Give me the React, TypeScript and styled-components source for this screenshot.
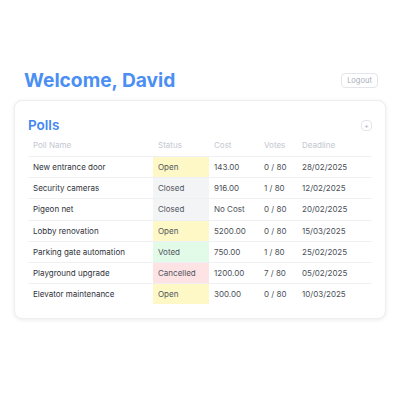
import React from "react";
import styled, { createGlobalStyle } from "styled-components";

const Global = createGlobalStyle`
  html, body { margin: 0; padding: 0; background: #ffffff; }
  body { font-family: Inter, "Noto Sans", sans-serif; }
`;

const Page = styled.div`
  width: 400px;
  height: 400px;
  box-sizing: border-box;
  padding: 68px 14px 0 14px;
`;

const Header = styled.header`
  display: flex;
  align-items: center;
  justify-content: space-between;
  height: 24px;
  padding: 0 8px 0 10px;
`;

const Title = styled.h1`
  margin: 0;
  font-size: 19.2px;
  line-height: 24px;
  font-weight: 700;
  color: #4b8ff3;
  letter-spacing: 0;
`;

const LogoutButton = styled.button`
  box-sizing: border-box;
  width: 37px;
  height: 15px;
  padding: 0;
  border: 1px solid #e3e5ea;
  border-radius: 4px;
  background: #fff;
  font-family: Inter, sans-serif;
  font-size: 7.5px;
  line-height: 13px;
  color: #a9aeb8;
`;

const Card = styled.section`
  margin-top: 8px;
  box-sizing: border-box;
  border: 1px solid #eceef2;
  border-radius: 8px;
  padding: 15px 13px 14px 13px;
  background: #fff;
  box-shadow: 0 1px 4px rgba(0, 0, 0, 0.08);
`;

const CardHead = styled.div`
  display: flex;
  align-items: center;
  justify-content: space-between;
  height: 18px;
`;

const CardTitle = styled.h2`
  margin: 0;
  font-size: 13.5px;
  line-height: 18px;
  font-weight: 600;
  color: #3f86f2;
`;

const PlusButton = styled.button`
  box-sizing: border-box;
  width: 11px;
  height: 11px;
  padding: 0;
  border: 1px solid #e3e5ea;
  border-radius: 4px;
  background: #fff;
  font-family: Inter, sans-serif;
  font-size: 7px;
  line-height: 9px;
  color: #a9aeb8;
`;

const Row = styled.div<{ $head?: boolean; $last?: boolean }>`
  display: grid;
  grid-template-columns: 125px 56px 50px 38px 1fr;
  height: ${(p) => (p.$head ? "22px" : "20.2px")};
  border-bottom: ${(p) => (p.$last ? "none" : "1px solid #eef0f3")};
  font-size: 8px;
  color: ${(p) => (p.$head ? "#c3c7cf" : "#4a4f57")};
`;

const Cell = styled.div<{ $strong?: boolean }>`
  display: flex;
  align-items: center;
  padding-left: 5px;
  white-space: nowrap;
  color: ${(p) => (p.$strong ? "#2f333a" : "inherit")};
`;

const statusBg: Record<string, string> = {
  Open: "#fdf8c6",
  Closed: "#f3f4f6",
  Voted: "#e2fae8",
  Cancelled: "#fde3e3",
};

const StatusCell = styled(Cell)<{ $status: string }>`
  background: ${(p) => statusBg[p.$status] || "transparent"};
  color: #50555d;
`;

const polls = [
  { name: "New entrance door", status: "Open", cost: "143.00", votes: "0 / 80", deadline: "28/02/2025" },
  { name: "Security cameras", status: "Closed", cost: "916.00", votes: "1 / 80", deadline: "12/02/2025" },
  { name: "Pigeon net", status: "Closed", cost: "No Cost", votes: "0 / 80", deadline: "20/02/2025" },
  { name: "Lobby renovation", status: "Open", cost: "5200.00", votes: "0 / 80", deadline: "15/03/2025" },
  { name: "Parking gate automation", status: "Voted", cost: "750.00", votes: "1 / 80", deadline: "25/02/2025" },
  { name: "Playground upgrade", status: "Cancelled", cost: "1200.00", votes: "7 / 80", deadline: "05/02/2025" },
  { name: "Elevator maintenance", status: "Open", cost: "300.00", votes: "0 / 80", deadline: "10/03/2025" },
];

export default function App() {
  return (
    <>
      <Global />
      <Page>
        <Header>
          <Title>Welcome, David</Title>
          <LogoutButton>Logout</LogoutButton>
        </Header>
        <Card>
          <CardHead>
            <CardTitle>Polls</CardTitle>
            <PlusButton>+</PlusButton>
          </CardHead>
          <Row $head>
            <Cell>Poll Name</Cell>
            <Cell>Status</Cell>
            <Cell>Cost</Cell>
            <Cell>Votes</Cell>
            <Cell>Deadline</Cell>
          </Row>
          {polls.map((p, i) => (
            <Row key={p.name} $last={i === polls.length - 1}>
              <Cell $strong>{p.name}</Cell>
              <StatusCell $status={p.status}>{p.status}</StatusCell>
              <Cell>{p.cost}</Cell>
              <Cell>{p.votes}</Cell>
              <Cell>{p.deadline}</Cell>
            </Row>
          ))}
        </Card>
      </Page>
    </>
  );
}
